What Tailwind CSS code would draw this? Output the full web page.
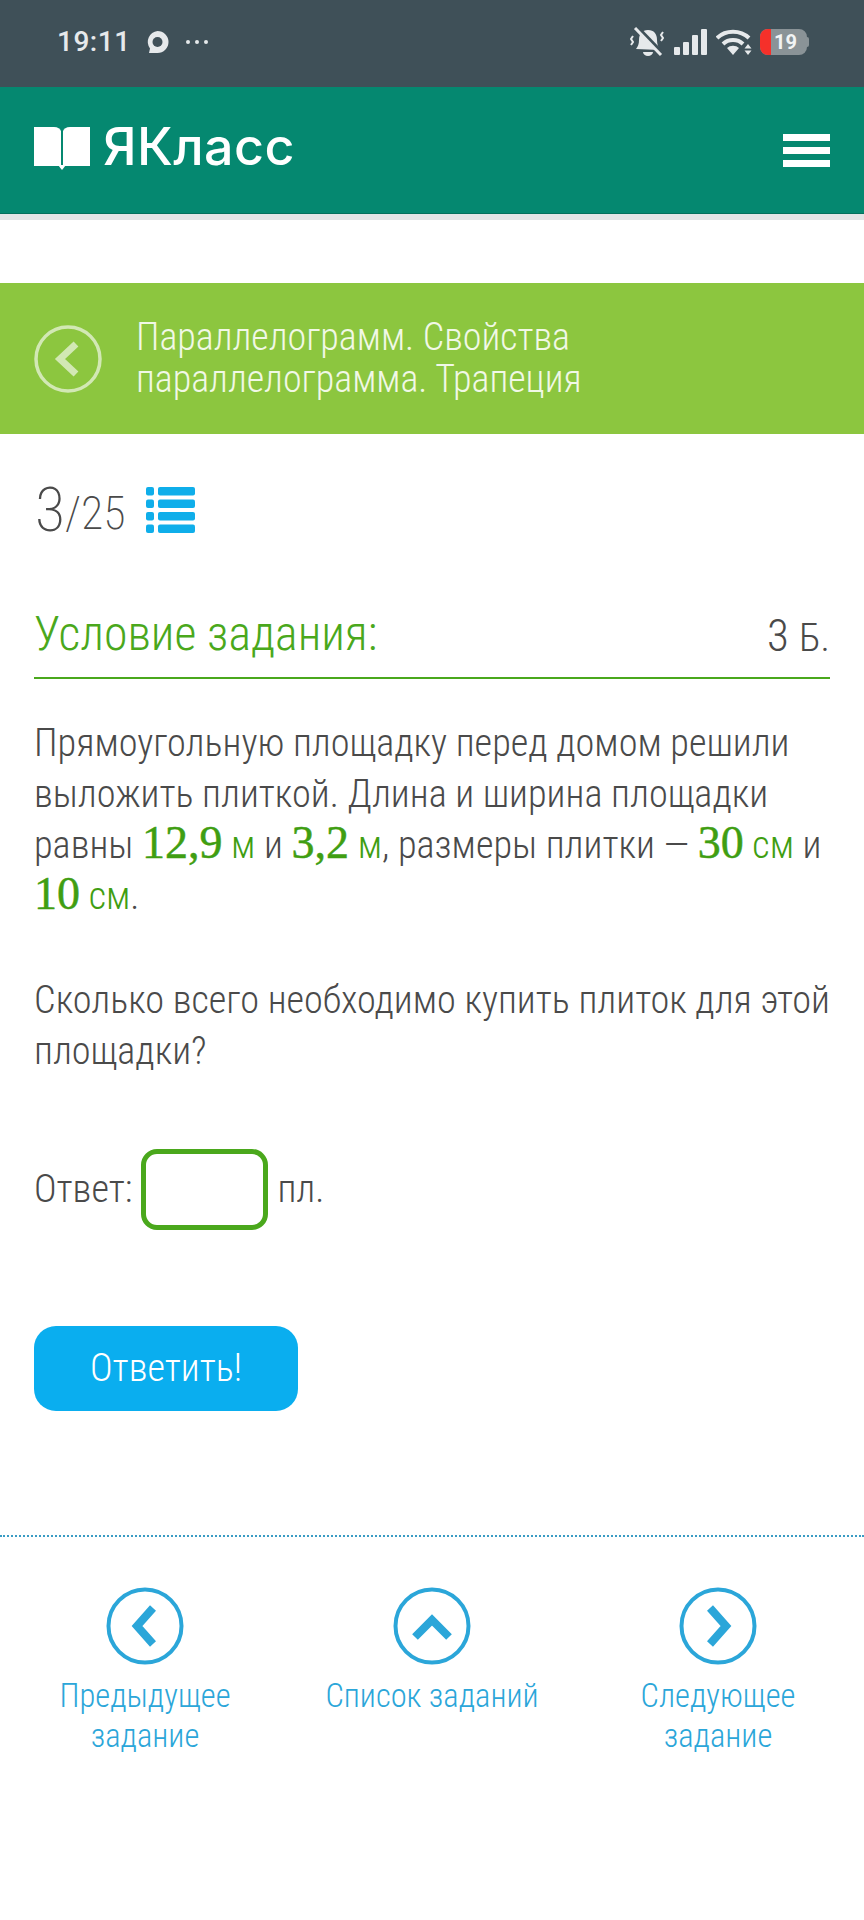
<!DOCTYPE html>
<html lang="ru">
<head>
    <meta charset="UTF-8">
    <meta name="viewport" content="width=device-width, initial-scale=1.0">
    <title>ЯКласс</title>
    <script src="https://cdn.jsdelivr.net/npm/@tailwindcss/browser@4"></script>
</head>
<body class="bg-white font-['Roboto',sans-serif] font-light [font-stretch:75%] text-[#4a4a4a] w-[864px] h-[1920px] overflow-hidden">
    <!-- Status bar -->
    <div class="h-[87px] bg-[#3f5058] flex items-center justify-between pl-[57px] pr-[55px] text-[#e6e9eb]">
        <div class="flex items-center -mt-[3px]">
            <span class="text-[28px] font-medium [font-stretch:100%] leading-none tracking-[0.5px]">19:11</span>
            <svg class="ml-[15px]" width="23" height="24" viewBox="0 0 23 24"><path d="M11.500 1a11 11 0 0 1 0 22H3l1-4.500A11 11 0 0 1 11.500 1z" fill="#e6e9eb"/><circle cx="11.500" cy="12" r="5" fill="#3f5058"/></svg>
            <svg class="ml-[16px]" width="24" height="6" viewBox="0 0 24 6" fill="#e6e9eb"><circle cx="3" cy="3" r="2"/><circle cx="12" cy="3" r="2"/><circle cx="21" cy="3" r="2"/></svg>
        </div>
        <div class="flex items-center -mt-[3px]">
            <svg width="36" height="30" viewBox="0 0 36 30" fill="none"><path d="M18 3c-6 0-9 4-9 10 0 4-1 6-3 9l24 1c-2-3-3-6-3-10 0-6-3-10-9-10z" fill="#e6e9eb"/><path d="M13 25h10a5 4 0 0 1-10 0z" fill="#e6e9eb"/><path d="M7 0l26 27" stroke="#3f5058" stroke-width="4"/><path d="M5 1l26 27" stroke="#e6e9eb" stroke-width="3"/><path d="M3 9l-2 3 2 3-2 3M33 5l-2 3 2 3-2 3" stroke="#e6e9eb" stroke-width="2"/></svg>
            <svg class="ml-[8px]" width="33" height="26" viewBox="0 0 33 26" fill="#e6e9eb"><rect x="0" y="18" width="6" height="8" rx="1"/><rect x="9" y="13" width="6" height="13" rx="1"/><rect x="18" y="6" width="6" height="20" rx="1"/><rect x="27" y="0" width="6" height="26" rx="1"/></svg>
            <svg class="ml-[9px]" width="36" height="26" viewBox="0 0 36 26" fill="none"><path d="M1 9a22 20 0 0 1 32 0M7 15a14 13 0 0 1 20 0" stroke="#e6e9eb" stroke-width="4"/><path d="M11 19a8 7 0 0 1 12 0l-6 7z" fill="#e6e9eb"/><path d="M32 15l3.500 4.500h-7zM32 26l3.500-4.500h-7z" fill="#e6e9eb"/></svg>
            <div class="ml-[8px] w-[47px] h-[26px] rounded-[8px] bg-[#8a9397] overflow-hidden flex items-center">
                <div class="w-[11px] h-full bg-[#f5302a]"></div>
                <span class="ml-[3px] text-[20px] font-bold [font-stretch:100%] leading-none text-[#f2f4f5]">19</span>
            </div>
            <div class="w-[2px] h-[10px] bg-[#8a9397] rounded-r-[2px]"></div>
        </div>
    </div>

    <!-- Header -->
    <header class="h-[127px] bg-[#058870] border-b-[1px] border-[#04705c] flex items-center justify-between px-[34px]">
        <div class="flex items-center -mt-[4px]">
            <svg width="56" height="44" viewBox="0 0 56 44" fill="#fff"><path d="M0 1h20c4 0 6 2 7 4v35H0z"/><path d="M56 1H36c-4 0-6 2-7 4v35h27z"/><path d="M24 39h8l-4 5z"/></svg>
            <span class="ml-[13px] -mt-[3px] text-[52px] font-['Inter',sans-serif] font-medium [font-stretch:100%] text-white leading-none tracking-[0.4px]">ЯКласс</span>
        </div>
        <div class="flex flex-col gap-[6px]">
            <div class="w-[47px] h-[7px] bg-white"></div>
            <div class="w-[47px] h-[7px] bg-white"></div>
            <div class="w-[47px] h-[7px] bg-white"></div>
        </div>
    </header>
    <div class="h-[6px] bg-[#e3e5e6]"></div>

    <!-- Topic banner -->
    <div class="mt-[63px] h-[151px] bg-[#8cc63f] flex items-center pl-[34px]">
        <svg class="shrink-0" width="68" height="68" viewBox="0 0 68 68" fill="none" stroke="#d2e8b4"><circle cx="34" cy="34" r="32" stroke-width="3.500"/><path d="M42 19L26 34l16 15" stroke-width="7"/></svg>
        <div class="ml-[34px] -mt-[2px] text-[38px] leading-[42px] text-[#f1f8e6]">Параллелограмм. Свойства<br>параллелограмма. Трапеция</div>
    </div>

    <!-- Counter -->
    <div class="mt-[51px] ml-[35px] flex items-center h-[50px]">
        <span class="text-[62px] leading-none font-extralight">3</span><span class="text-[46px] leading-none font-extralight mt-[6px]">/25</span>
        <svg class="ml-[20px]" width="49" height="46" viewBox="0 0 49 46" fill="#0faeea"><rect x="0" y="0" width="8" height="8.500" rx="2"/><rect x="12" y="0" width="37" height="8.500" rx="2"/><rect x="0" y="12.500" width="8" height="8.500" rx="2"/><rect x="12" y="12.500" width="37" height="8.500" rx="2"/><rect x="0" y="25" width="8" height="8.500" rx="2"/><rect x="12" y="25" width="37" height="8.500" rx="2"/><rect x="0" y="37.500" width="8" height="8.500" rx="2"/><rect x="12" y="37.500" width="37" height="8.500" rx="2"/></svg>
    </div>

    <main class="mx-[34px]">
        <!-- Task heading -->
        <div class="mt-[70px] h-[74px] border-b-2 border-[#4aa81c] flex items-center justify-between pb-[12px]">
            <h2 class="text-[47.800px] leading-none font-light text-[#4aa81c]">Условие задания:</h2>
            <span class="text-[45px] leading-none">3 <span class="text-[39.500px]">Б.</span></span>
        </div>

        <!-- Task text -->
        <div class="mt-[39px] text-[38.250px] leading-[51px]">
            <p>Прямоугольную площадку перед домом решили<br>выложить плиткой. Длина и ширина площадки<br>равны <span class="font-['Liberation_Serif',serif] font-normal [-webkit-text-stroke:0.5px] text-[46px] leading-none text-[#3f9e12]">12,9</span> <span class="text-[#3f9e12]">м</span> и <span class="font-['Liberation_Serif',serif] font-normal [-webkit-text-stroke:0.5px] text-[46px] leading-none text-[#3f9e12]">3,2</span> <span class="text-[#3f9e12]">м</span>, размеры плитки — <span class="font-['Liberation_Serif',serif] font-normal [-webkit-text-stroke:0.5px] text-[46px] leading-none text-[#3f9e12]">30</span> <span class="text-[#3f9e12]">см</span> и<br><span class="font-['Liberation_Serif',serif] font-normal [-webkit-text-stroke:0.5px] text-[46px] leading-none text-[#3f9e12]">10</span> <span class="text-[#3f9e12]">см</span>.</p>
            <p class="mt-[53px]">Сколько всего необходимо купить плиток для этой<br>площадки?</p>
        </div>

        <!-- Answer -->
        <div class="mt-[72px] flex items-center text-[38.250px]">
            <span>Ответ:</span>
            <div class="ml-[9px] w-[127px] h-[81px] border-[5px] border-[#4aa81c] rounded-[16px]"></div>
            <span class="ml-[9px]">пл.</span>
        </div>

        <button class="mt-[96px] block w-[264px] h-[85px] rounded-[22px] bg-[#0aaeef] text-white text-[38.250px]">Ответить!</button>
    </main>

    <!-- Bottom nav -->
    <div class="mt-[124px] border-t-2 border-dotted border-[#3a9cc4]"></div>
    <nav class="flex text-[32.500px] leading-[40px] text-[#2ba6d9] text-center pt-[50px]">
        <a class="w-[290px] flex flex-col items-center">
            <svg width="78" height="78" viewBox="0 0 78 78" fill="none" stroke="#2ba6d9"><circle cx="39" cy="39" r="36.500" stroke-width="4"/><path d="M47 21L31 39l16 18" stroke-width="8"/></svg>
            <span class="mt-[11px]">Предыдущее<br>задание</span>
        </a>
        <a class="w-[284px] flex flex-col items-center">
            <svg width="78" height="78" viewBox="0 0 78 78" fill="none" stroke="#2ba6d9"><circle cx="39" cy="39" r="36.500" stroke-width="4"/><path d="M22 50l17-17 17 17" stroke-width="8"/></svg>
            <span class="mt-[11px]">Список заданий</span>
        </a>
        <a class="w-[288px] flex flex-col items-center">
            <svg width="78" height="78" viewBox="0 0 78 78" fill="none" stroke="#2ba6d9"><circle cx="39" cy="39" r="36.500" stroke-width="4"/><path d="M31 21l16 18-16 18" stroke-width="8"/></svg>
            <span class="mt-[11px]">Следующее<br>задание</span>
        </a>
    </nav>
</body>
</html>
